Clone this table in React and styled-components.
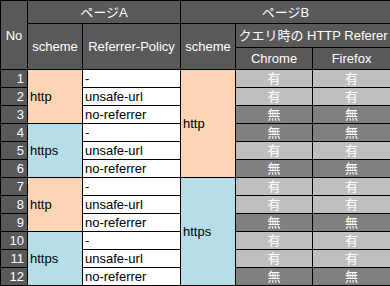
import React from "react";
import styled, { createGlobalStyle } from "styled-components";

const Global = createGlobalStyle`
  html, body { margin: 0; padding: 0; background: #ffffff; }
  body { font-family: "Liberation Sans", "Noto Sans CJK JP", sans-serif; }
`;

const Table = styled.table`
  border-collapse: collapse;
  table-layout: fixed;
  width: 390px;
  font-family: "Liberation Sans", "Noto Sans CJK JP", sans-serif;
  font-size: 13px;
  line-height: 15px;
`;

const Row = styled.tr`
  height: ${(p) => p.$h}px;
`;

const Cell = styled.td`
  border: 1px solid #000;
  padding: 0 2px;
  overflow: hidden;
  white-space: nowrap;
  vertical-align: middle;
`;

const Head = styled(Cell).attrs({ as: "th" })`
  background: #595959;
  color: #ffffff;
  font-weight: normal;
  text-align: center;
`;

const Num = styled(Cell)`
  background: #595959;
  color: #ffffff;
  text-align: right;
  padding-right: 3px;
`;

const Scheme = styled(Cell)`
  background: ${(p) => (p.$secure ? "#b7dee8" : "#fcd5b4")};
  color: #000;
  text-align: left;
`;

const Policy = styled(Cell)`
  background: #ffffff;
  color: #000;
  text-align: left;
`;

const Result = styled(Cell)`
  background: ${(p) => (p.$yes ? "#bfbfbf" : "#808080")};
  color: #ffffff;
  text-align: center;
`;

const policies = ["-", "unsafe-url", "no-referrer"];
const results = [
  [true, true],
  [true, true],
  [false, false],
  [false, false],
  [true, true],
  [false, false],
  [true, true],
  [true, true],
  [false, false],
  [true, true],
  [true, true],
  [false, false],
];

export default function App() {
  return (
    <>
      <Global />
      <Table>
        <colgroup>
          <col style={{ width: 27 }} />
          <col style={{ width: 55 }} />
          <col style={{ width: 98 }} />
          <col style={{ width: 55 }} />
          <col style={{ width: 77 }} />
          <col style={{ width: 78 }} />
        </colgroup>
        <thead>
          <Row $h={23}>
            <Head rowSpan={3}>No</Head>
            <Head colSpan={2}>ページA</Head>
            <Head colSpan={3}>ページB</Head>
          </Row>
          <Row $h={24}>
            <Head rowSpan={2}>scheme</Head>
            <Head rowSpan={2}>Referrer-Policy</Head>
            <Head rowSpan={2}>scheme</Head>
            <Head colSpan={2}>クエリ時の HTTP Referer</Head>
          </Row>
          <Row $h={22}>
            <Head>Chrome</Head>
            <Head>Firefox</Head>
          </Row>
        </thead>
        <tbody>
          {results.map((r, i) => {
            const n = i + 1;
            const groupA = Math.floor(i / 3);
            const secureA = groupA % 2 === 1;
            const secureB = i >= 6;
            return (
              <Row key={n} $h={18}>
                <Num>{n}</Num>
                {i % 3 === 0 && (
                  <Scheme rowSpan={3} $secure={secureA}>
                    {secureA ? "https" : "http"}
                  </Scheme>
                )}
                <Policy>{policies[i % 3]}</Policy>
                {i % 6 === 0 && (
                  <Scheme rowSpan={6} $secure={secureB}>
                    {secureB ? "https" : "http"}
                  </Scheme>
                )}
                <Result $yes={r[0]}>{r[0] ? "有" : "無"}</Result>
                <Result $yes={r[1]}>{r[1] ? "有" : "無"}</Result>
              </Row>
            );
          })}
        </tbody>
      </Table>
    </>
  );
}
